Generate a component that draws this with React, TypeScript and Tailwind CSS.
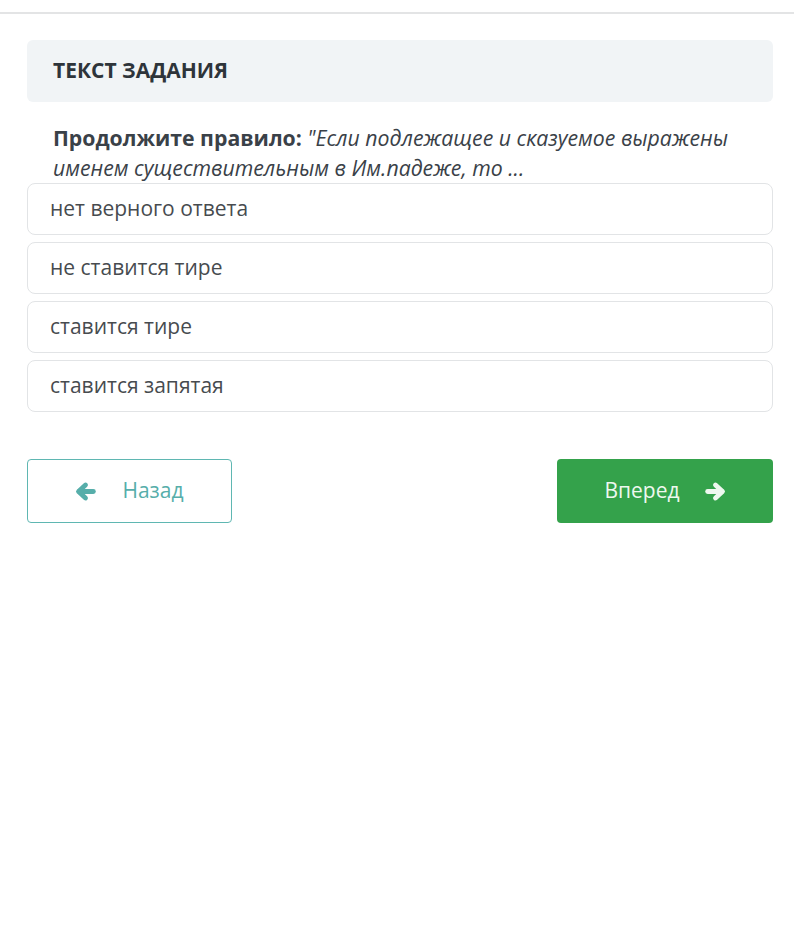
const options = [
  "нет верного ответа",
  "не ставится тире",
  "ставится тире",
  "ставится запятая",
];

function Arrow({ dir }: { dir: "left" | "right" }) {
  return (
    <svg
      viewBox="0 0 24 24"
      className={"h-[21px] w-[21px]" + (dir === "right" ? " rotate-180" : "")}
      fill="none"
      stroke="currentColor"
      strokeWidth={5.5}
      strokeLinecap="round"
      strokeLinejoin="round"
    >
      <path d="M5 12h16" />
      <path d="M12 4.5 4 12l8 7.5" />
    </svg>
  );
}

export default function App() {
  return (
    <div className="min-h-[938px] w-[794px] bg-white font-['Open_Sans',sans-serif]">
      <div className="pt-3">
        <div className="h-[2px] bg-[#e3e4e5]" />
      </div>

      <div className="pl-[27px] pr-[21px] pt-[26px]">
        {/* Header */}
        <div className="flex h-[62px] items-center rounded-md bg-[#f1f4f6] px-[26px]">
          <h2 className="text-[21px] font-bold uppercase text-[#2e343a]">Текст задания</h2>
        </div>

        {/* Question */}
        <p className="mt-[21px] px-[26px] text-[21.25px] leading-[30px] text-[#3a4148]">
          <span className="font-bold">Продолжите правило: </span>
          <span className="italic">
            "Если подлежащее и сказуемое выражены именем существительным в Им.падеже, то ...
          </span>
        </p>

        {/* Options */}
        <div className="flex flex-col gap-[7px]">
          {options.map((o) => (
            <div
              key={o}
              className="flex h-[52px] items-center rounded-lg border border-[#e2e4e6] bg-white px-[22px] text-[21px] text-[#474b4f]"
            >
              {o}
            </div>
          ))}
        </div>

        {/* Navigation */}
        <div className="mt-[47px] flex items-center justify-between">
          <button className="flex h-[64px] w-[205px] items-center justify-center gap-[26px] rounded border border-[#5fb7b2] bg-white text-[21px] text-[#56aeaa]">
            <Arrow dir="left" />
            <span>Назад</span>
          </button>
          <button className="flex h-[64px] w-[216px] items-center justify-center gap-[25px] rounded bg-[#34a24b] text-[21px] text-[#eef8ef]">
            <span>Вперед</span>
            <Arrow dir="right" />
          </button>
        </div>
      </div>
    </div>
  );
}
